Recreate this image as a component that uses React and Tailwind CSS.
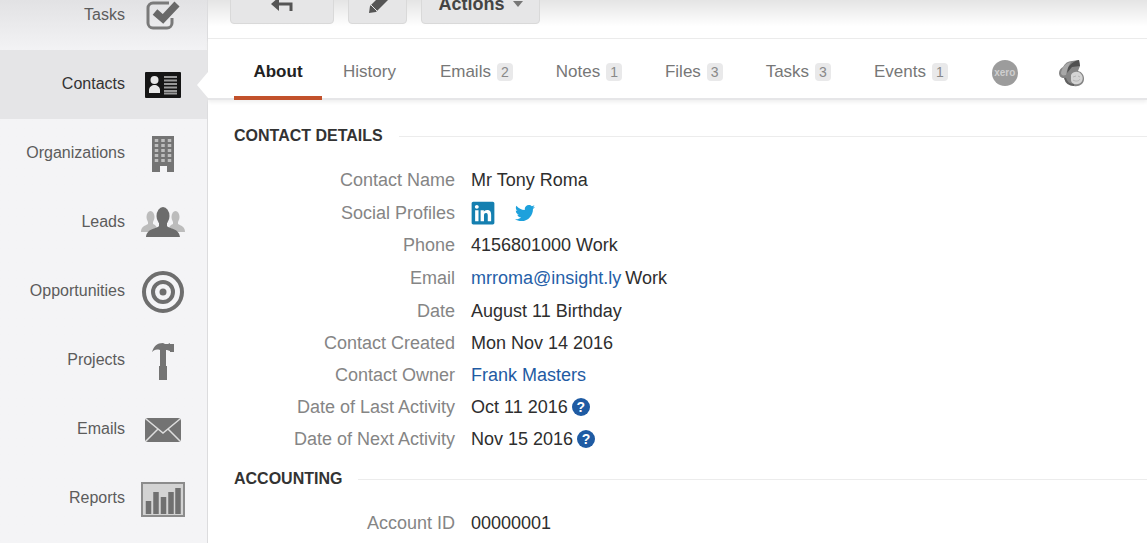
import { FaLinkedin, FaTwitter } from "react-icons/fa";

const TasksIcon = () => (
  <svg viewBox="0 0 44 44" className="h-11 w-11" fill="none">
    <path d="M28 9H12a5 5 0 0 0-5 5v15a5 5 0 0 0 5 5h14a5 5 0 0 0 5-5v-5" stroke="#7a7a7a" strokeWidth="3" />
    <path d="M14 18l8 7 14-15" stroke="#686868" strokeWidth="7" />
  </svg>
);

const ContactsIcon = () => (
  <svg viewBox="0 0 44 44" className="h-11 w-11">
    <rect x="4" y="9" width="36" height="26" rx="1" fill="#151515" />
    <circle cx="13.500" cy="17" r="4" fill="#e6e6e6" />
    <path d="M8 30v-3c0-3 3-5 5.500-5s5.500 2 5.500 5v3z" fill="#e6e6e6" />
    <path d="M23 14h13M23 17.500h13M23 21h13M23 24.500h13M23 28h13M23 30.500h13" stroke="#999" strokeWidth="2" />
  </svg>
);

const OrganizationsIcon = () => (
  <svg viewBox="0 0 44 44" className="h-11 w-11">
    <path d="M11 4h22v36h-7v-6h-7v6h-8z" fill="#747474" />
    <path d="M15.500 7v24M22 7v24M28.500 7v24" stroke="#bdbdbd" strokeWidth="3.500" strokeDasharray="3 2" />
  </svg>
);

const LeadsIcon = () => (
  <svg viewBox="0 0 44 44" className="h-11 w-11">
    <g fill="#bcbcbc">
      <ellipse cx="9.500" cy="16" rx="4" ry="6" />
      <ellipse cx="34.500" cy="16" rx="4" ry="6" />
      <path d="M0 31c0-5 3-6 7-8v-5h5v5c3 1 4 3 5 8zM44 31c0-5-3-6-7-8v-5h-5v5c-3 1-4 3-5 8z" />
    </g>
    <ellipse cx="22" cy="15" rx="6.500" ry="9" fill="#6c6c6c" />
    <path d="M18 18h8v7c2 3 12 2 13 11H5c1-9 11-8 13-11z" fill="#6c6c6c" />
  </svg>
);

const OpportunitiesIcon = () => (
  <svg viewBox="0 0 44 44" className="h-11 w-11" fill="none" stroke="#6e6e6e">
    <circle cx="22" cy="22" r="19" strokeWidth="4" />
    <circle cx="22" cy="22" r="10" strokeWidth="4" />
    <circle cx="22" cy="22" r="3.500" fill="#6e6e6e" stroke="none" />
  </svg>
);

const ProjectsIcon = () => (
  <svg viewBox="0 0 44 44" className="h-11 w-11" fill="#747474">
    <path d="M11 13c2-6 5-9 11-9l2 1h3l2-1v1h4v8h-4v-1l-3-1h-1v16h1v14h-8V27h1V11c-4-1-6 0-8 2z" />
  </svg>
);

const EmailsIcon = () => (
  <svg viewBox="0 0 44 44" className="h-11 w-11">
    <rect x="4" y="10" width="36" height="24" rx="3" fill="#737373" />
    <path d="M5 11l17 14 17-14M5 33l12-12M39 33L27 21" stroke="#dedede" strokeWidth="1.500" fill="none" />
  </svg>
);

const ReportsIcon = () => (
  <svg viewBox="0 0 44 44" className="h-11 w-11">
    <rect x="1" y="6" width="42" height="33" fill="#d3d3d3" stroke="#8c8c8c" strokeWidth="2" />
    <path d="M7.500 37V24M15 37V15M22.500 37V20M30 37V15M37 37V11" stroke="#707070" strokeWidth="5.500" />
  </svg>
);

const MailchimpIcon = () => (
  <svg viewBox="0 0 28 28" className="h-7 w-7">
    <path d="M1 14c0-3 2-5 4-6 2-4 5-6 9-6l7-1 1 6-2 5c4 1 6 4 6 8 0 5-5 8-10 7-5-1-8-4-10-8-3 0-5-2-5-5z" fill="#858585" />
    <path d="M3 14C4 8 8 4 13 3c-2 3-4 7-5 13-3 1-5 0-5-2z" fill="#a8a8a8" />
    <path d="M10 9c2-4 6-7 11-8l1 6-8 1-5 6z" fill="#505050" />
    <path d="M13 16c2-4 8-4 10-1 3 3 2 9-3 10-4 1-7-1-7-4z" fill="#d4d4d4" />
    <path d="M7 19c1 4 4 7 9 7" stroke="#606060" strokeWidth="2" fill="none" />
    <path d="M15 18l3-1M20 17l2 1M15 21c3 2 6 1 7-1" stroke="#b5b5b5" strokeWidth="1" fill="none" />
  </svg>
);

const menu = [
  { name: "Tasks", Icon: TasksIcon },
  { name: "Contacts", Icon: ContactsIcon },
  { name: "Organizations", Icon: OrganizationsIcon },
  { name: "Leads", Icon: LeadsIcon },
  { name: "Opportunities", Icon: OpportunitiesIcon },
  { name: "Projects", Icon: ProjectsIcon },
  { name: "Emails", Icon: EmailsIcon },
  { name: "Reports", Icon: ReportsIcon },
];

const tabs = [
  { name: "Emails", count: 2 },
  { name: "Notes", count: 1 },
  { name: "Files", count: 3 },
  { name: "Tasks", count: 3 },
  { name: "Events", count: 1 },
];

const Section = ({ title, children }) => (
  <section>
    <div className="flex items-center gap-4">
      <h2 className="text-base font-bold text-[#333]">{title}</h2>
      <div className="h-px flex-1 bg-[#ececec]" />
    </div>
    <dl className="pt-4">{children}</dl>
  </section>
);

const Row = ({ label, roomy, children }) => (
  <div
    className={`flex items-center gap-4 text-lg ${roomy ? "h-[33px]" : "h-8"}`}
  >
    <dt className="w-[221px] text-right text-[#858585]">{label}</dt>
    <dd className="flex items-center gap-1 text-[#2e2e2e]">{children}</dd>
  </div>
);

const Help = () => (
  <button
    aria-label="Help"
    className="flex h-[18px] w-[18px] items-center justify-center rounded-full bg-[#1f5ba3] text-sm font-bold text-white"
  >
    ?
  </button>
);

const App = () => {
  return (
    <div className="flex h-screen overflow-hidden bg-white font-['Liberation_Sans',Arial,sans-serif]">
      {/* Sidebar */}
      <aside className="w-52 shrink-0 border-r border-[#dcdcde] bg-linear-to-b from-[#e2e2e4] to-[#f4f4f6] to-10%">
        <nav className="-mt-[19px]">
          {menu.map(({ name, Icon }) => (
            <a
              key={name}
              href="#"
              className={`relative flex h-[69px] items-center justify-end gap-4 pr-[22px] text-base ${
                name === "Contacts"
                  ? "bg-[#e5e5e7] text-[#333]"
                  : "text-[#5c5c5c]"
              }`}
            >
              <span className="pb-0.5">{name}</span>
              <Icon />
              {name === "Contacts" && (
                <svg
                  viewBox="0 0 12 26"
                  className="absolute -right-px h-[26px] w-3"
                >
                  <path d="M12 0v26L1 13z" fill="#fff" />
                </svg>
              )}
            </a>
          ))}
        </nav>
      </aside>

      <main className="min-w-0 flex-1">
        {/* Toolbar */}
        <div className="-mt-5 flex gap-[14px] border-b border-[#ebebeb] bg-linear-to-b from-[#e2e2e2] from-30% to-white to-80% pb-[14px] pl-[22px]">
          <button
            aria-label="Back"
            className="flex h-11 w-[104px] items-center justify-center rounded-sm border border-[#d9d9d9] bg-[#e6e6e7]"
          >
            <svg viewBox="0 0 22 20" className="h-5 w-[22px]" fill="none">
              <path d="M7 12h13v7" stroke="#555" strokeWidth="3" />
              <path d="M0 12l8-7v14z" fill="#555" />
            </svg>
          </button>
          <button
            aria-label="Edit"
            className="flex h-11 w-[59px] items-center justify-center rounded-sm border border-[#d9d9d9] bg-[#e6e6e7]"
          >
            <svg viewBox="0 0 24 24" className="h-6 w-6" fill="#555">
              <path d="M3 23l1-7L17 3l6 6-13 13z" />
              <path d="M5 15l6 6" stroke="#e6e6e7" strokeWidth="1" />
            </svg>
          </button>
          <button className="flex h-11 w-[119px] items-center justify-center gap-2 rounded-sm border border-[#d9d9d9] bg-[#e6e6e7] pt-1 text-lg font-bold text-[#444]">
            Actions
            <svg viewBox="0 0 10 6" className="h-[6px] w-[10px]">
              <path d="M0 0h10L5 6z" fill="#777" />
            </svg>
          </button>
        </div>

        {/* Tabs */}
        <div className="flex h-[61px] items-center border-b-2 border-[#e6e6e8] pl-[26px] text-[17px] text-[#777] shadow-[0_2px_4px_#eeeeee]">
          <a
            href="#"
            className="-mb-[2px] flex h-[61px] w-[88px] items-center justify-center border-b-4 border-[#c2512b] pt-2 font-bold text-[#222]"
          >
            About
          </a>
          <a href="#" className="ml-[21px] pt-1.5">
            History
          </a>
          <div className="ml-11 flex gap-[43px] pt-1.5">
            {tabs.map((tab) => (
              <a key={tab.name} href="#" className="flex items-center gap-[6px]">
                {tab.name}
                <span className="rounded-sm bg-[#e9e9ea] px-1 text-sm leading-[18px] text-[#888]">
                  {tab.count}
                </span>
              </a>
            ))}
          </div>
          <a
            href="#"
            className="mt-2 ml-11 flex h-[26px] w-[26px] items-center justify-center rounded-full bg-[#9c9c9c] text-[10px] font-bold text-[#cfcfcf]"
          >
            xero
          </a>
          <a href="#" aria-label="MailChimp" className="mt-2 ml-10">
            <MailchimpIcon />
          </a>
        </div>

        {/* Details */}
        <div className="space-y-3 pt-6 pl-[26px]">
          <Section title="CONTACT DETAILS">
            <Row label="Contact Name">Mr Tony Roma</Row>
            <Row label="Social Profiles" roomy>
              <a href="#" aria-label="LinkedIn">
                <FaLinkedin className="h-[26px] w-6 text-[#147fb0]" />
              </a>
              <a href="#" aria-label="Twitter" className="ml-4">
                <FaTwitter className="h-5 w-5 text-[#1da1dc]" />
              </a>
            </Row>
            <Row label="Phone">4156801000 Work</Row>
            <Row label="Email" roomy>
              <a href="#" className="text-[#2560a8]">
                mrroma@insight.ly
              </a>
              Work
            </Row>
            <Row label="Date" roomy>
              August 11 Birthday
            </Row>
            <Row label="Contact Created">Mon Nov 14 2016</Row>
            <Row label="Contact Owner">
              <a href="#" className="text-[#1f5ba3]">
                Frank Masters
              </a>
            </Row>
            <Row label="Date of Last Activity">
              Oct 11 2016 <Help />
            </Row>
            <Row label="Date of Next Activity">
              Nov 15 2016 <Help />
            </Row>
          </Section>
          <Section title="ACCOUNTING">
            <Row label="Account ID">00000001</Row>
          </Section>
        </div>
      </main>
    </div>
  );
};

export default App;
